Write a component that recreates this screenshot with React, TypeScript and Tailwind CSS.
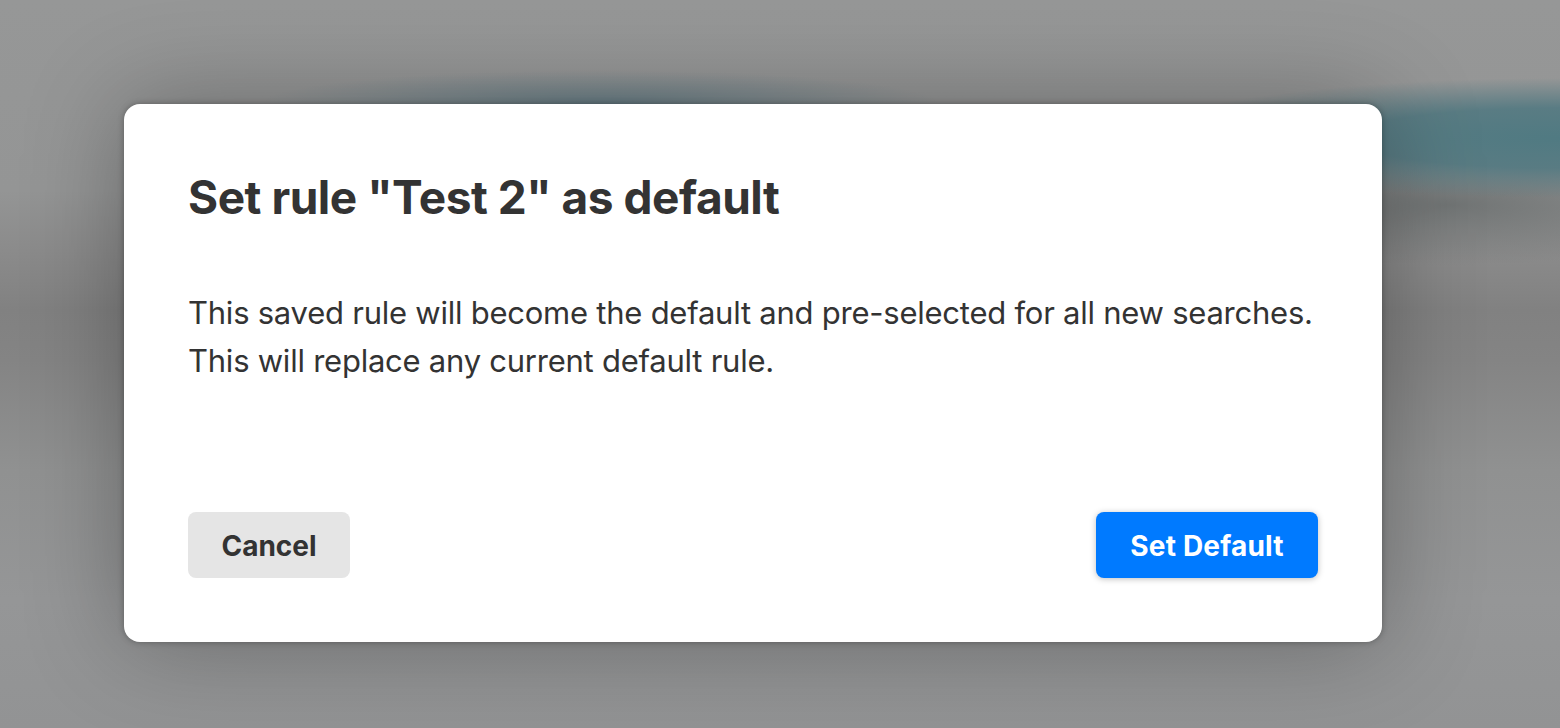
export default function App() {
  return (
    <div className="relative flex h-[728px] w-[1560px] items-start overflow-hidden bg-[#8f9091] pl-[124px] pt-[104px] font-['Inter',sans-serif]">
      {/* blurred page behind the dialog */}
      <div className="absolute inset-0 bg-[linear-gradient(180deg,#969797_0px,#949595_190px,#8b8b8b_250px,#818181_310px,#848484_360px,#909191_470px,#959697_600px,#929394_728px)]" />
      <div className="absolute inset-0 bg-[radial-gradient(ellipse_420px_60px_at_1560px_138px,#507a82_0%,#557a82ee_50%,#577a8200_100%),radial-gradient(ellipse_340px_34px_at_600px_104px,#6a8088_0%,#6f848a00_100%),radial-gradient(ellipse_300px_60px_at_1450px_205px,#6c7070dd_0%,#6c707000_100%)]" />
      <div className="relative flex h-[538px] w-[1258px] flex-col rounded-[16px] bg-white px-[64px] pb-[64px] pt-[64px] text-[#333333] shadow-[0_0_6px_rgba(0,0,0,0.3),0_0_100px_rgba(0,0,0,0.3)]">
        <h1 className="text-[46px] font-bold leading-[58px] tracking-[-0.47px]">Set rule "Test 2" as default</h1>
        <p className="mt-[63px] text-[31px] leading-[48px] tracking-[-0.24px]">
          This saved rule will become the default and pre-selected for all new searches.
          <br />
          This will replace any current default rule.
        </p>
        <div className="mt-auto flex items-center justify-between">
          <button className="h-[66px] w-[162px] rounded-[8px] bg-[#e5e5e5] pt-[2px] text-[28px] font-bold text-[#333333]">
            Cancel
          </button>
          <button className="h-[66px] w-[222px] rounded-[8px] bg-[#007aff] pt-[2px] text-[28px] font-bold tracking-[0.2px] text-white shadow-[0_1px_6px_rgba(0,0,0,0.25)]">
            Set Default
          </button>
        </div>
      </div>
    </div>
  );
}
